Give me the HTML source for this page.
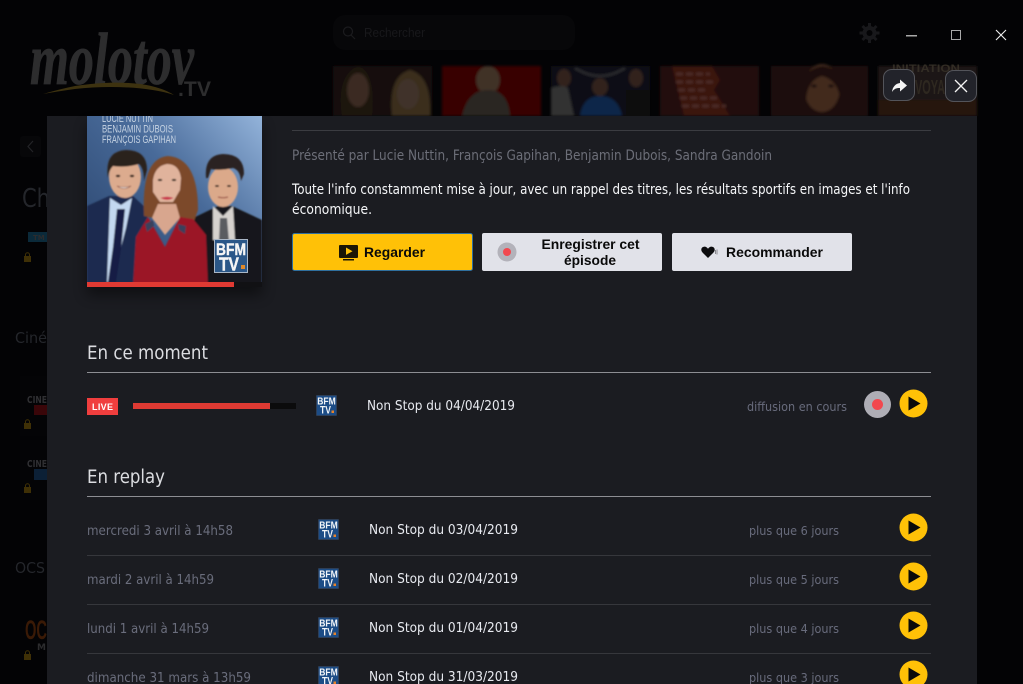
<!DOCTYPE html>
<html lang="fr"><head><meta charset="utf-8"><title>Molotov</title>
<style>
html,body{margin:0;padding:0;background:#030305;width:1023px;height:684px;overflow:hidden}
svg{display:block}
text{font-family:"DejaVu Sans","Liberation Sans",sans-serif}
.b{font-family:"Liberation Sans",sans-serif;font-weight:bold;font-size:14px;fill:#0a0a0a}
.d{font-size:13.5px;fill:#6a6d7c}
.t{font-size:13.5px;fill:#e8eaf0}
.r{font-size:12.500px;fill:#686b7c}
.h{font-size:18.500px;fill:#dcdde1}
.p{font-size:14.500px}
</style></head><body>
<svg width="1023" height="684" viewBox="0 0 1023 684" xmlns="http://www.w3.org/2000/svg">
<defs>
<filter id="bl" x="-10%" y="-10%" width="120%" height="120%"><feGaussianBlur stdDeviation="1.2"/></filter>
<filter id="bs" x="-10%" y="-10%" width="120%" height="120%"><feGaussianBlur stdDeviation=".7"/></filter>
<filter id="sh" x="-20%" y="-20%" width="140%" height="140%"><feGaussianBlur stdDeviation="7"/></filter>
<linearGradient id="sky" x1="0" y1=".9" x2="1" y2="0"><stop offset="0" stop-color="#2a446c"/><stop offset=".55" stop-color="#486a99"/><stop offset="1" stop-color="#93b3da"/></linearGradient>
<clipPath id="pc"><rect x="87" y="116" width="175" height="171"/></clipPath>
<g id="bfm"><rect x="0" y="0" width="21" height="21" rx="1" fill="#2c3e58"/><rect x="1" y="1" width="19" height="19" fill="#1c4c86"/><text x="10.5" y="9.500" text-anchor="middle" font-size="10" font-weight="bold" fill="#f2f5f8" textLength="18.500" lengthAdjust="spacingAndGlyphs" style="font-family:'Liberation Sans',sans-serif">BFM</text><text x="9.500" y="18.500" text-anchor="middle" font-size="11" font-weight="bold" fill="#f2f5f8" textLength="11" lengthAdjust="spacingAndGlyphs" style="font-family:'Liberation Sans',sans-serif">TV</text><rect x="15.500" y="15.500" width="2.500" height="2.500" fill="#e8842a"/></g>
<g id="play"><circle r="14" fill="#ffc107"/><path d="M-5-7 7 0-5 7Z" fill="#0a0a0a"/></g>
<g id="lock"><path d="M0 3h7v6H0z" fill="#3f3006"/><path d="M1.500 3V1.800a2 2 0 0 1 4 0V3" fill="none" stroke="#3f3006"/></g>
</defs>

<rect width="1023" height="684" fill="#030305"/>
<!-- background logo -->
<g>
<text x="30" y="84" font-size="74" font-style="italic" font-weight="bold" fill="#2d2d2e" stroke="#2d2d2e" stroke-width=".8" textLength="164" lengthAdjust="spacingAndGlyphs" style="font-family:'Liberation Serif',serif">molotov</text>
<path d="M43 94Q60 89 75 86C110 81 150 80 174 95C150 87 110 85 75 89Q60 91 43 94Z" fill="#3d3210"/>
<text x="178" y="96" font-size="21" font-weight="bold" fill="#2d2d2e" textLength="33" lengthAdjust="spacingAndGlyphs" style="font-family:'Liberation Sans',sans-serif">.TV</text>
</g>
<!-- search -->
<rect x="333" y="15" width="242" height="35" rx="12" fill="#070709"/>
<circle cx="348" cy="31.500" r="4.500" fill="none" stroke="#1b1b1e" stroke-width="1.200"/><path d="M351 35l4 4" stroke="#1b1b1e" stroke-width="1.200"/>
<text x="364" y="37" font-size="13" fill="#18181b" textLength="61" lengthAdjust="spacingAndGlyphs" style="font-family:'Liberation Sans',sans-serif">Rechercher</text>
<!-- gear -->
<g fill="#18181b"><circle cx="869.500" cy="33" r="7"/><path d="M868 23h3v20h-3zM859.500 31.500h20v3h-20z"/><path d="M861.500 27l2-2 14 14-2 2zM875.500 25l2 2-14 14-2-2z"/></g><circle cx="869.500" cy="33" r="3" fill="#030305"/>
<!-- window controls -->
<rect x="906" y="35" width="11" height="1.500" fill="#a8a8a8"/>
<rect x="951.500" y="30.500" width="9" height="9" fill="none" stroke="#a8a8a8"/>
<path d="M996 30l10 10M1006 30l-10 10" stroke="#f0f0f0" stroke-width="1.100"/>
<!-- thumbnails -->
<g filter="url(#bl)">
<rect x="333" y="66" width="99" height="50" fill="#14100d"/>
<path d="M342 116q-6-40 16-50 18 6 14 50z" fill="#1f1510"/><ellipse cx="358" cy="90" rx="11" ry="17" fill="#3a2a22"/>
<path d="M392 116q-4-40 18-46 22 6 20 46z" fill="#3b2f1f"/><ellipse cx="408" cy="94" rx="11" ry="15" fill="#40322a"/>
<rect x="442" y="66" width="99" height="50" fill="#370506"/>
<ellipse cx="488" cy="80" rx="12" ry="14" fill="#3f3026"/><path d="M462 116q6-26 26-26 20 0 22 26z" fill="#2b2724"/>
<rect x="551" y="66" width="99" height="50" fill="#0b1014"/>
<ellipse cx="564" cy="78" rx="7" ry="9" fill="#33241d"/><path d="M551 116V88q12-4 17 0l6 28z" fill="#333130"/>
<ellipse cx="600" cy="87" rx="8" ry="9" fill="#33241d"/><path d="M580 116q3-20 20-20 18 0 22 20z" fill="#08284a"/><ellipse cx="636" cy="78" rx="7" ry="9" fill="#33241d"/><path d="M626 116V90h24v26z" fill="#0a0a0c"/>
<path d="M575 68q25 16 50 0" fill="none" stroke="#2f2f33" stroke-width="2"/>
<rect x="660" y="66" width="99" height="50" fill="#220a07"/>
<path d="M672 66h40l8 14-6 10 16 26h-46z" fill="#3a120e"/>
<path d="M676 74h34M676 82h38M678 90h30M680 98h40M682 106h44" stroke="#4e2f2b" stroke-width="2.500" stroke-dasharray="7 3"/>
<rect x="771" y="66" width="97" height="50" fill="#1a0f0b"/>
<ellipse cx="822" cy="88" rx="18" ry="24" fill="#42291e"/><path d="M797 116q-2-46 25-50 28 2 26 50h-8q4-34-18-40-20 6-15 40z" fill="#1e110c"/>
<ellipse cx="814" cy="86" rx="3" ry="1.500" fill="#150b07"/><ellipse cx="831" cy="86" rx="3" ry="1.500" fill="#150b07"/>
<rect x="878" y="66" width="99" height="50" fill="#1f1812"/>
<rect x="878" y="100" width="99" height="16" fill="#28140c"/>
</g>
<text x="892" y="72" font-size="11" font-weight="bold" fill="#332d25" textLength="68" lengthAdjust="spacingAndGlyphs" style="font-family:'Liberation Sans',sans-serif">INITIATION</text>
<text x="915" y="94" font-size="20" font-weight="bold" fill="#2e2820" textLength="30" lengthAdjust="spacingAndGlyphs" style="font-family:'Liberation Sans',sans-serif">VOYA</text>
<!-- background left -->
<rect x="20" y="136" width="21" height="21" rx="3" fill="#070709"/>
<path d="M33 141l-5 5.500 5 5.500" fill="none" stroke="#232427" stroke-width="1.200"/>
<text x="22" y="207" font-size="26" fill="#24262b" textLength="28" lengthAdjust="spacingAndGlyphs">Ch</text>
<rect x="28" y="232" width="19" height="10" fill="#0b2a3a"/><text x="33" y="240" font-size="7" font-weight="bold" fill="#2c2c2e">TM</text>
<use href="#lock" x="24" y="253"/>
<rect x="20" y="376" width="27" height="60" fill="#040406"/>
<rect x="20" y="440" width="27" height="60" fill="#040406"/>
<text x="15" y="343" font-size="15" fill="#24262b" textLength="32" lengthAdjust="spacingAndGlyphs">Ciné</text>
<text x="27" y="403" font-size="10" font-weight="bold" fill="#303033" textLength="20" lengthAdjust="spacingAndGlyphs">CINE</text>
<rect x="34" y="405" width="13" height="10" fill="#3a0609"/>
<use href="#lock" x="24" y="420"/>
<text x="27" y="467" font-size="10" font-weight="bold" fill="#303033" textLength="20" lengthAdjust="spacingAndGlyphs">CINE</text>
<rect x="34" y="469" width="13" height="11" fill="#0c2036"/>
<use href="#lock" x="24" y="484"/>
<text x="15" y="573" font-size="15" fill="#24262b" textLength="30" lengthAdjust="spacingAndGlyphs">OCS</text>
<text x="25" y="639" font-size="27" font-weight="bold" fill="#3a1a06" textLength="22" lengthAdjust="spacingAndGlyphs" style="font-family:'Liberation Sans',sans-serif">OC</text>
<text x="37" y="650" font-size="9" font-weight="bold" fill="#2c2c2e">M</text>
<use href="#lock" x="24" y="651"/>

<!-- modal -->
<rect x="47" y="116" width="930" height="568" fill="#1b1c21"/>
<!-- share & close -->
<rect x="883.500" y="69.500" width="31" height="31" rx="8" fill="#22232a" stroke="#53545a"/>
<path d="M892 92c.5-5 3.500-8.500 8-9v-3.500l7 6-7 6v-3.500c-3.500-.2-6 .8-8 4z" fill="#f4f4f4"/>
<rect x="945.500" y="70.500" width="31" height="31" rx="8" fill="#22232a" stroke="#53545a"/>
<path d="M955 80l12 12M967 80l-12 12" stroke="#f4f4f4" stroke-width="1.300"/>

<!-- poster -->
<rect x="87" y="125" width="175" height="170" fill="#000" opacity=".45" filter="url(#sh)"/>
<rect x="87" y="116" width="175" height="171" fill="#1b1c21"/>
<g clip-path="url(#pc)">
<rect x="87" y="116" width="175" height="171" fill="url(#sky)"/>
<g filter="url(#bs)">
<!-- man 2 -->
<path d="M193 218l25-12h14l30 14v67h-69z" fill="#12161f"/>
<path d="M213 206l10 10 10-10 2 34h-22z" fill="#d6d2ce"/>
<path d="M220 218h7l2 24h-10z" fill="#5a5c60"/>
<ellipse cx="223" cy="187" rx="15" ry="20" fill="#dba98a"/>
<path d="M206 178q-2-23 17-24 21 0 21 20l-3 7q-1-11-8-13-14 3-22 1l-3 9z" fill="#2a2320"/>
<ellipse cx="217" cy="186" rx="2" ry="1" fill="#3b2a22"/><ellipse cx="229" cy="186" rx="2" ry="1" fill="#3b2a22"/><path d="M218 197q5 1.500 10 0" stroke="#a0604f" stroke-width="1.200" fill="none"/>
<!-- man 1 -->
<path d="M87 206l22-10h24l15 14-6 77H87z" fill="#1d2b50"/>
<path d="M110 198l11 7 11-7-6 30-14 54h-5z" fill="#c3d8f0"/>
<path d="M117 209h8l-4 40-5 33h-8l5-35z" fill="#121d45"/>
<ellipse cx="125" cy="177" rx="16" ry="21" fill="#dcab8e"/>
<path d="M108 178q-4-27 18-28 21 0 21 20l-3 11q0-13-5-17-14 4-26 2-4 4-5 12z" fill="#2c211b"/>
<ellipse cx="118" cy="176" rx="2.200" ry="1.200" fill="#33241c"/><ellipse cx="132" cy="176" rx="2.200" ry="1.200" fill="#33241c"/><path d="M117 186q7 5 14 0q-7 2-14 0z" fill="#f4ece6" stroke="#8a4f3f" stroke-width=".6"/>
<!-- woman -->
<path d="M144 216q-3-58 24-60 30 2 30 54l-5 14-14-6h-26z" fill="#7c4a2a"/>
<path d="M153 180q2-14 14-16 12 0 14 14l-1 12-7 12h-13l-7-10z" fill="#e0b39c"/>
<path d="M158 204h18l4 14-15 17-13-17z" fill="#d8a68e"/>
<path d="M133 287l3-50 12-20 17 30 15-30 13 2 13 16 2 52z" fill="#9b1526"/>
<path d="M145 224l8-4 1 6-7 6zM178 224l8 2-1 8-6-4z" fill="#3a3f5c"/>
<ellipse cx="160" cy="180" rx="2.200" ry="1.100" fill="#3b2a22"/><ellipse cx="174" cy="180" rx="2.200" ry="1.100" fill="#3b2a22"/><path d="M162 198q5 2.500 10 0q-5-1.500-10 0z" fill="#c8304a" stroke="#c8304a"/>
</g>
<!-- poster text -->
<g fill="#c5d2e2" font-size="11">
<text x="102" y="122" textLength="51" lengthAdjust="spacingAndGlyphs" style="font-family:'Liberation Sans',sans-serif">LUCIE NUTTIN</text>
<text x="102" y="132.500" textLength="71" lengthAdjust="spacingAndGlyphs" style="font-family:'Liberation Sans',sans-serif">BENJAMIN DUBOIS</text>
<text x="102" y="143" textLength="74" lengthAdjust="spacingAndGlyphs" style="font-family:'Liberation Sans',sans-serif">FRANÇOIS GAPIHAN</text>
</g>
<!-- BFM -->
<rect x="214" y="239" width="34" height="34" fill="#2b5788"/>
<rect x="214.500" y="239.500" width="33" height="33" fill="none" stroke="#a9b6c6"/>
<text x="231" y="255" text-anchor="middle" font-size="17" font-weight="bold" fill="#f5f5f5" stroke="#f5f5f5" stroke-width=".4" textLength="30" lengthAdjust="spacingAndGlyphs" style="font-family:'Liberation Sans',sans-serif">BFM</text>
<text x="229" y="270.500" text-anchor="middle" font-size="18" font-weight="bold" fill="#f5f5f5" stroke="#f5f5f5" stroke-width=".4" textLength="20" lengthAdjust="spacingAndGlyphs" style="font-family:'Liberation Sans',sans-serif">TV</text>
<rect x="241" y="265" width="4" height="4" fill="#e08a2a"/>
<rect x="87" y="282" width="147" height="5" fill="#e03a33"/>
<rect x="234" y="282" width="28" height="5" fill="#111114"/>
</g>

<!-- title block -->
<rect x="292" y="130" width="639" height="1" fill="#3b3c41"/>
<text x="292" y="160" class="p" fill="#6c6e78" textLength="480" lengthAdjust="spacingAndGlyphs">Présenté par Lucie Nuttin, François Gapihan, Benjamin Dubois, Sandra Gandoin</text>
<text x="292" y="194" class="p" fill="#f5f6f8" textLength="618" lengthAdjust="spacingAndGlyphs">Toute l'info constamment mise à jour, avec un rappel des titres, les résultats sportifs en images et l'info</text>
<text x="292" y="214" class="p" fill="#f5f6f8" textLength="80" lengthAdjust="spacingAndGlyphs">économique.</text>

<!-- buttons -->
<rect x="292.500" y="233.500" width="180" height="37" rx="2" fill="#ffc107" stroke="#2f6f9e"/>
<path d="M339 246a1 1 0 0 1 1-1h17a1 1 0 0 1 1 1v11a1 1 0 0 1-1 1h-17a1 1 0 0 1-1-1zM343 259h11v1.500h-11z" fill="#1b1606"/>
<path d="M346 247.500l6.500 3.700-6.500 3.700z" fill="#ffc107"/>
<text x="364" y="257" class="b" textLength="61" lengthAdjust="spacingAndGlyphs">Regarder</text>
<rect x="482" y="233" width="180" height="38" rx="2" fill="#e1e2e9"/>
<circle cx="507" cy="252" r="9.500" fill="#b3b2ba"/><circle cx="507" cy="252" r="4" fill="#f2484f"/>
<text x="590.500" y="249" text-anchor="middle" class="b" textLength="98" lengthAdjust="spacingAndGlyphs">Enregistrer cet</text>
<text x="590" y="265" text-anchor="middle" class="b" textLength="52" lengthAdjust="spacingAndGlyphs">épisode</text>
<rect x="672" y="233" width="180" height="38" rx="2" fill="#e1e2e9"/>
<path d="M708 258l-5.500-5.500c-2-2-1.500-5.500 1.500-5.800 1.800-.2 3 .8 4 2 1-1.200 2.200-2.200 4-2 3 .3 3.500 3.800 1.500 5.800z" fill="#0c0c0e"/>
<path d="M715.500 250v4M717 249.500v5" stroke="#66666b" stroke-width=".7"/>
<text x="726" y="257" class="b" textLength="97" lengthAdjust="spacingAndGlyphs">Recommander</text>

<!-- En ce moment -->
<text x="87" y="359" class="h" textLength="121" lengthAdjust="spacingAndGlyphs">En ce moment</text>
<rect x="87" y="372" width="844" height="1" fill="#8d8e93"/>
<rect x="87" y="398" width="31" height="17" fill="#f03e3e"/>
<text x="102.500" y="410" text-anchor="middle" font-size="9" font-weight="bold" fill="#fff" textLength="21" style="font-family:'Liberation Sans',sans-serif">LIVE</text>
<rect x="133" y="403" width="163" height="6" fill="#0b0b0c"/>
<rect x="133" y="403" width="137" height="6" fill="#de3a33"/>
<use href="#bfm" x="316" y="395"/>
<text x="367" y="410" class="t" textLength="148" lengthAdjust="spacingAndGlyphs">Non Stop du 04/04/2019</text>
<text x="747" y="411" class="r" textLength="100" lengthAdjust="spacingAndGlyphs">diffusion en cours</text>
<circle cx="877.500" cy="404.500" r="13.500" fill="#aeadb5"/><circle cx="877.500" cy="404.500" r="5.500" fill="#f2484f"/>
<use href="#play" x="913.500" y="403.500"/>

<!-- En replay -->
<text x="87" y="483" class="h" textLength="78" lengthAdjust="spacingAndGlyphs">En replay</text>
<rect x="87" y="496" width="844" height="1" fill="#8d8e93"/>

<text x="87" y="535" class="d" textLength="146" lengthAdjust="spacingAndGlyphs">mercredi 3 avril à 14h58</text>
<use href="#bfm" x="318" y="519"/>
<text x="369" y="534" class="t" textLength="149" lengthAdjust="spacingAndGlyphs">Non Stop du 03/04/2019</text>
<text x="749" y="535" class="r" textLength="90" lengthAdjust="spacingAndGlyphs">plus que 6 jours</text>
<use href="#play" x="913.500" y="527.500"/>
<rect x="87" y="555" width="844" height="1" fill="#36373c"/>

<text x="87" y="584" class="d" textLength="127" lengthAdjust="spacingAndGlyphs">mardi 2 avril à 14h59</text>
<use href="#bfm" x="318" y="568"/>
<text x="369" y="583" class="t" textLength="149" lengthAdjust="spacingAndGlyphs">Non Stop du 02/04/2019</text>
<text x="749" y="584" class="r" textLength="90" lengthAdjust="spacingAndGlyphs">plus que 5 jours</text>
<use href="#play" x="913.500" y="576.500"/>
<rect x="87" y="604" width="844" height="1" fill="#36373c"/>

<text x="87" y="633" class="d" textLength="122" lengthAdjust="spacingAndGlyphs">lundi 1 avril à 14h59</text>
<use href="#bfm" x="318" y="617"/>
<text x="369" y="632" class="t" textLength="149" lengthAdjust="spacingAndGlyphs">Non Stop du 01/04/2019</text>
<text x="749" y="633" class="r" textLength="90" lengthAdjust="spacingAndGlyphs">plus que 4 jours</text>
<use href="#play" x="913.500" y="625.500"/>
<rect x="87" y="653" width="844" height="1" fill="#36373c"/>

<text x="87" y="682" class="d" textLength="164" lengthAdjust="spacingAndGlyphs">dimanche 31 mars à 13h59</text>
<use href="#bfm" x="318" y="666"/>
<text x="369" y="681" class="t" textLength="149" lengthAdjust="spacingAndGlyphs">Non Stop du 31/03/2019</text>
<text x="749" y="682" class="r" textLength="90" lengthAdjust="spacingAndGlyphs">plus que 3 jours</text>
<use href="#play" x="913.500" y="674.500"/>
</svg>
</body></html>
